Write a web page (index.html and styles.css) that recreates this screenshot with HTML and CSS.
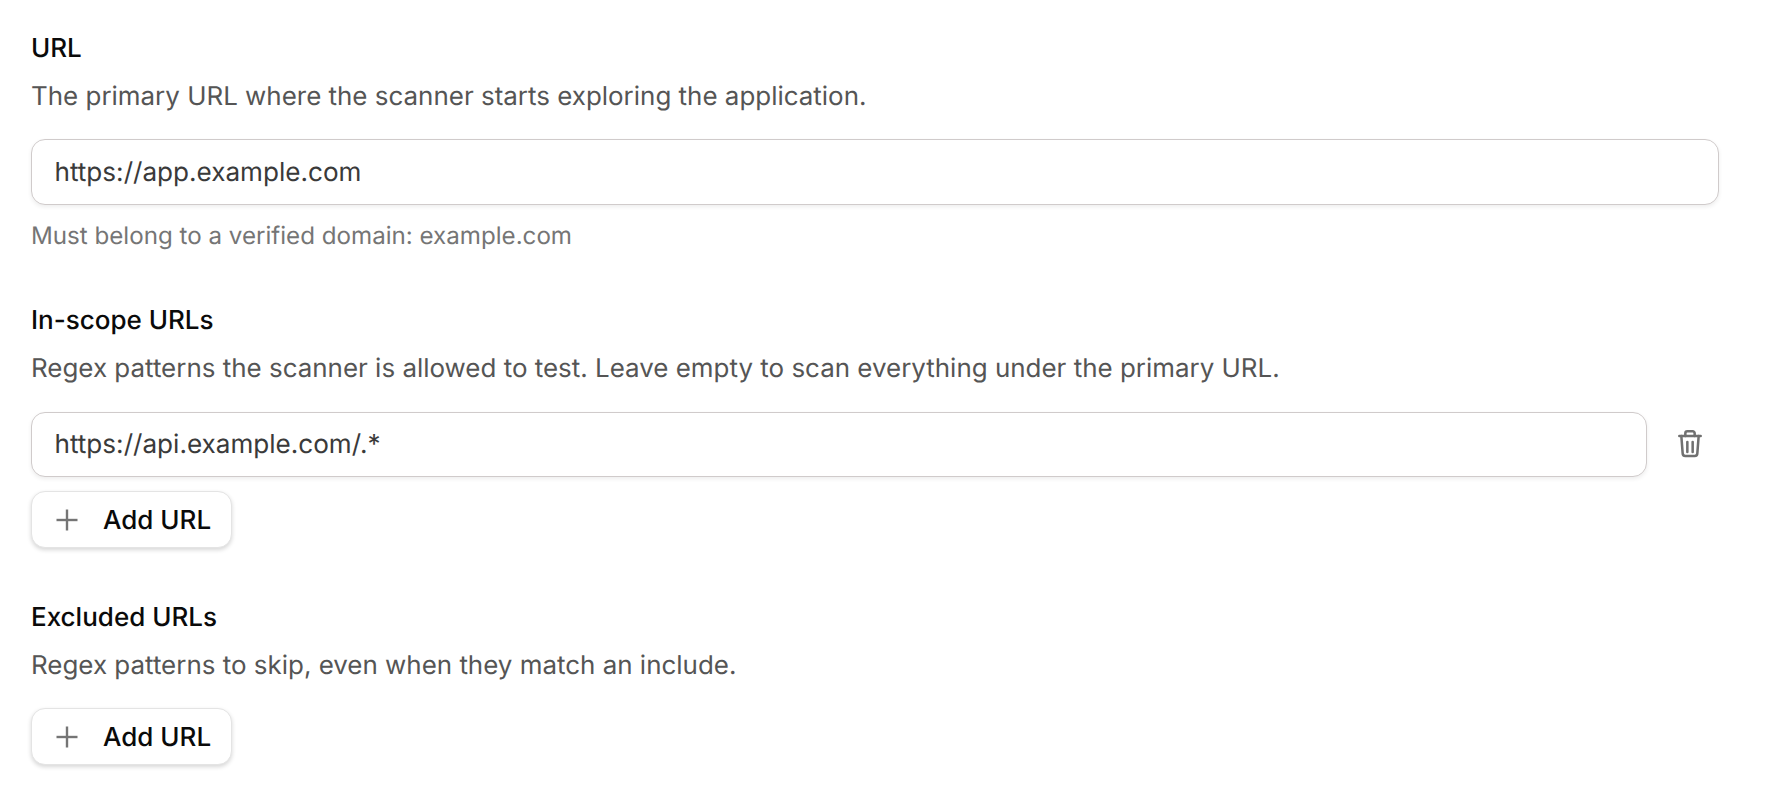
FILE: index.html
```html
<!DOCTYPE html>
<html lang="en">
<head>
<meta charset="utf-8">
<title>Scan scope</title>
<link rel="stylesheet" href="styles.css">
</head>
<body>
<main class="form">
  <section class="field">
    <h2 class="label">URL</h2>
    <p class="desc">The primary URL where the scanner starts exploring the application.</p>
    <input class="input" type="text" value="https://app.example.com">
    <p class="hint">Must belong to a verified domain: example.com</p>
  </section>
  <section class="field">
    <h2 class="label">In-scope URLs</h2>
    <p class="desc">Regex patterns the scanner is allowed to test. Leave empty to scan everything under the primary URL.</p>
    <div class="row">
      <input class="input" type="text" value="https://api.example.com/.*">
      <button class="icon-btn" type="button" aria-label="Delete">
        <svg width="32" height="32" viewBox="0 0 24 24" fill="none" stroke="currentColor" stroke-width="1.900" stroke-linecap="round" stroke-linejoin="round"><path d="M4 6h16"/><path d="M5.500 6l1 13a2 2 0 0 0 2 2h7a2 2 0 0 0 2-2l1-13"/><path d="M8.500 6V4a1.500 1.500 0 0 1 1.500-1.500h4A1.500 1.500 0 0 1 15.500 4v2"/><path d="M10 10.500v7.500"/><path d="M14 10.500v7.500"/></svg>
      </button>
    </div>
    <button class="add-btn add-tight" type="button">
      <svg class="plus" width="24" height="24" viewBox="0 0 24 24" fill="none" stroke="currentColor" stroke-width="2.400"><path d="M12 1.500v21"/><path d="M1.500 12h21"/></svg>
      <span class="add-text">Add URL</span>
    </button>
  </section>
  <section class="field">
    <h2 class="label">Excluded URLs</h2>
    <p class="desc">Regex patterns to skip, even when they match an include.</p>
    <button class="add-btn" type="button">
      <svg class="plus" width="24" height="24" viewBox="0 0 24 24" fill="none" stroke="currentColor" stroke-width="2.400"><path d="M12 1.500v21"/><path d="M1.500 12h21"/></svg>
      <span class="add-text">Add URL</span>
    </button>
  </section>
</main>
</body>
</html>
```
FILE: styles.css
```css
* { box-sizing: border-box; }
html, body { margin: 0; background: #fff; }
body { font-family: Inter, "Liberation Sans", sans-serif; height: 812px; overflow: hidden; text-rendering: geometricPrecision; }
.form { display: flex; flex-direction: column; gap: 51.500px; padding: 30.500px 65px 0 31px; }
.field { display: flex; flex-direction: column; align-items: stretch; }
.label { margin: 0 0 12px; font-size: 26px; font-weight: 450; line-height: 36px; color: #0a0a0a; }
.desc { margin: 0 0 24.500px; font-size: 25.950px; font-weight: 400; line-height: 36px; color: #555; }
.input { display: block; width: 100%; height: 65.500px; padding: 1px 22.500px 0; font: 400 26.100px/36px Inter, sans-serif; color: #3a3a3a; background: #fff; border: 1.500px solid #d0cbcb; border-radius: 14px; box-shadow: 0 2px 4px rgba(0,0,0,.07); outline: none; text-rendering: geometricPrecision; }
.hint { margin: 15px 0 0; font-size: 24.150px; line-height: 32px; color: #757575; }
.row { display: flex; align-items: center; }
.row .input { flex: 1; }
.icon-btn { flex: none; width: 72px; height: 65.500px; display: flex; align-items: center; justify-content: center; padding: 0 0 0 14px; background: none; border: 0; color: #707070; }
.add-btn { align-self: flex-start; display: flex; align-items: center; gap: 24px; width: 201px; height: 57px; padding: 0 0 0 23px; font: 470 26px/32px Inter, sans-serif; color: #0a0a0a; background: #fff; border: 1.500px solid #e4e4e4; border-radius: 14px; box-shadow: 0 2px 4px rgba(0,0,0,.16); text-rendering: geometricPrecision; }
.add-tight { margin-top: 14px; }
.add-text { padding-top: 3px; }
.plus { flex: none; color: #757575; }
```
